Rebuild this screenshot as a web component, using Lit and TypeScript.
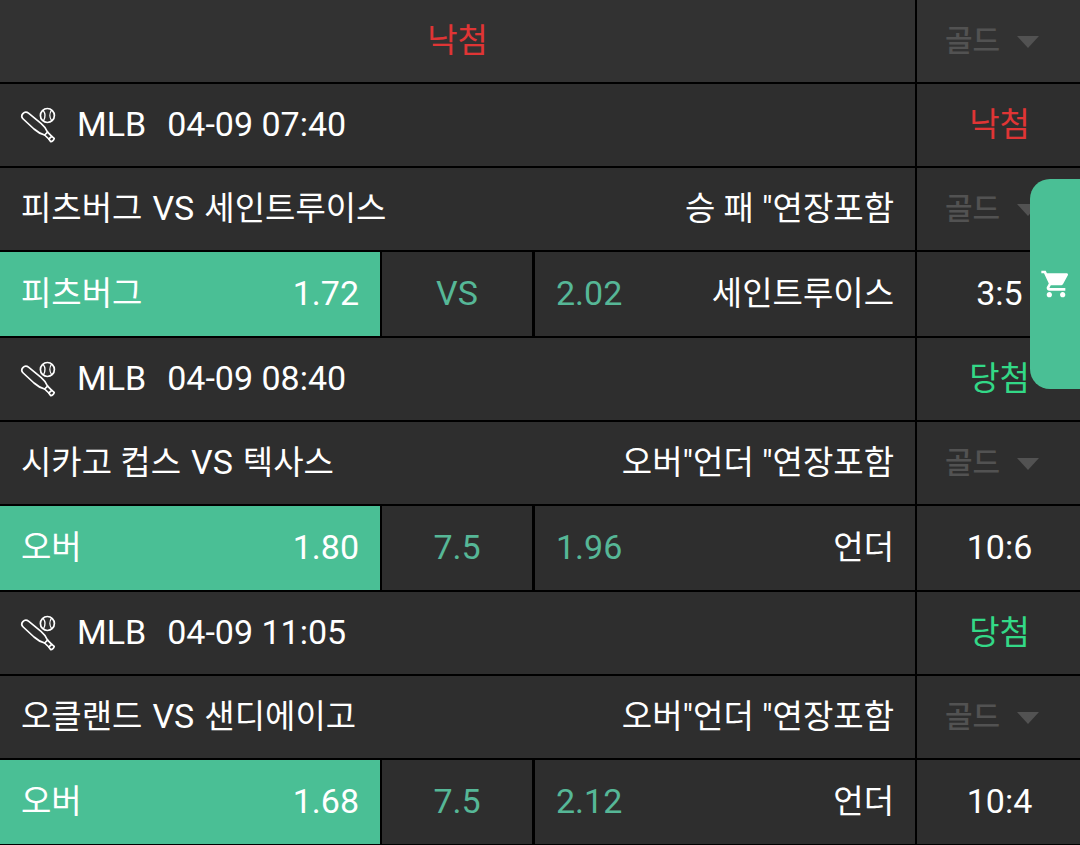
import { LitElement, html, css, svg } from "lit";
import { customElement, property } from "lit/decorators.js";

interface Game {
  league: string;
  time: string;
  won: boolean;
  teams: [string, string];
  market: string;
  home: string;
  homeOdds: string;
  line: string;
  awayOdds: string;
  away: string;
  score: string;
}

const GAMES: Game[] = [
  { league: "MLB", time: "04-09 07:40", won: false, teams: ["피츠버그", "세인트루이스"], market: '승 패 "연장포함', home: "피츠버그", homeOdds: "1.72", line: "VS", awayOdds: "2.02", away: "세인트루이스", score: "3:5" },
  { league: "MLB", time: "04-09 08:40", won: true, teams: ["시카고 컵스", "텍사스"], market: '오버"언더 "연장포함', home: "오버", homeOdds: "1.80", line: "7.5", awayOdds: "1.96", away: "언더", score: "10:6" },
  { league: "MLB", time: "04-09 11:05", won: true, teams: ["오클랜드", "샌디에이고"], market: '오버"언더 "연장포함', home: "오버", homeOdds: "1.68", line: "7.5", awayOdds: "2.12", away: "언더", score: "10:4" },
];

const baseball = svg`
  <svg class="sport" viewBox="0 0 36 36" aria-hidden="true">
    <g fill="none" stroke="#fff" stroke-width="1.7" stroke-linejoin="round" stroke-linecap="round">
      <path d="M8.8 6.4C6.8 4.8 4.4 5 2.9 6.6C1.4 8.3 1.5 10.4 3.2 12L14 22C17.4 25 21 27 24.6 28L28.8 32L30.6 34.6C32.2 34.8 34 33 34.2 31.4L31.8 29.4L27.6 25.2C26.4 21.8 24 19 21 16.4Z"/>
      <path d="M24.6 28L27.6 25.2M28.8 32L31.8 29.4"/>
      <circle cx="27.4" cy="8.5" r="7"/>
    </g>
    <path fill="none" stroke="#fff" stroke-width="1.3" stroke-linecap="round" d="M23.2 3.4C25.6 6.6 25.4 10.6 23.4 14M31.6 3.2C29.2 6.4 29.4 10.8 31.8 13.8"/>
  </svg>`;

@customElement("grade-select")
class GradeSelect extends LitElement {
  static styles = css`
    :host { display: block; }
    .wrap { display: flex; align-items: center; gap: 15px; }
    .select {
      appearance: none;
      border: 0;
      margin: 0;
      padding: 0;
      background: transparent;
      color: #525252;
      opacity: 1;
      font: 500 30px/40px Roboto, "Noto Sans CJK KR", sans-serif;
    }
    .arrow { display: block; width: 24px; height: 12px; margin-top: 2px; fill: #525252; }
  `;
  render() {
    return html`<div class="wrap">
      <select class="select" disabled aria-label="등급"><option>골드</option></select>
      <svg class="arrow" viewBox="0 0 24 12" aria-hidden="true"><path d="M1 0H23L12 12Z" /></svg>
    </div>`;
  }
}

@customElement("game-block")
class GameBlock extends LitElement {
  @property({ attribute: false }) game!: Game;

  static styles = css`
    :host { display: grid; gap: 2px; }
    .row { display: grid; grid-template-columns: minmax(0, 1fr) 163px; gap: 2px; }
    .cell {
      box-sizing: border-box;
      min-height: 82px;
      padding: 0 21px;
      background: #2e2e2e;
      display: flex;
      align-items: center;
      justify-content: space-between;
    }
    .info { justify-content: flex-start; padding-left: 20px; }
    .side { justify-content: center; padding: 0 0 0 2px; }
    .grade { justify-content: flex-start; padding: 0 0 0 28px; }
    .sport { width: 36px; height: 36px; margin-right: 21px; }
    .league { margin-right: 21px; }
    .teams { display: flex; align-items: center; gap: 10px; }
    .latin { font-size: 34px; padding-bottom: 2px; }
    .lost { color: #e03535; }
    .won { color: #33d987; }
    .odds { display: grid; grid-template-columns: minmax(0, 1fr) 151px minmax(0, 1fr); column-gap: 2px; }
    .tall { min-height: 84px; }
    .pick {
      width: 100%;
      border: 0;
      margin: 0;
      color: #fff;
      font: inherit;
      cursor: pointer;
    }
    .chosen { background: #4abf95; }
    .line {
      justify-content: center;
      padding: 0;
      border-right: 1px solid #000;
      color: #56b797;
    }
    .rate { color: #56b797; }
  `;

  render() {
    const g = this.game;
    return html`
      <div class="row">
        <div class="cell info">
          ${baseball}
          <span class="latin league">${g.league}</span>
          <span class="latin">${g.time}</span>
        </div>
        <div class="cell side ${g.won ? "won" : "lost"}">${g.won ? "당첨" : "낙첨"}</div>
      </div>
      <div class="row">
        <div class="cell">
          <div class="teams"><span>${g.teams[0]}</span><span class="latin">VS</span><span>${g.teams[1]}</span></div>
          <span>${g.market}</span>
        </div>
        <div class="cell grade"><grade-select></grade-select></div>
      </div>
      <div class="row">
        <div class="odds">
          <button class="cell tall pick chosen"><span>${g.home}</span><span class="latin">${g.homeOdds}</span></button>
          <div class="cell tall line"><span class="latin">${g.line}</span></div>
          <button class="cell tall pick"><span class="latin rate">${g.awayOdds}</span><span>${g.away}</span></button>
        </div>
        <div class="cell tall side"><span class="latin">${g.score}</span></div>
      </div>
    `;
  }
}

@customElement("app-root")
class AppRoot extends LitElement {
  static styles = css`
    :host {
      display: block;
      background: #000;
      color: #fff;
      font: 33px/44px Roboto, "Noto Sans CJK KR", sans-serif;
    }
    .slip { display: grid; gap: 2px; padding-bottom: 1px; }
    .head { display: grid; grid-template-columns: minmax(0, 1fr) 163px; gap: 2px; }
    .result, .grade {
      min-height: 82px;
      background: #323232;
      display: flex;
      align-items: center;
    }
    .result { justify-content: center; color: #e03535; }
    .grade { padding-left: 28px; }
    .cart {
      position: fixed;
      right: 0;
      top: 179px;
      width: 50px;
      height: 210px;
      border: 0;
      margin: 0;
      padding: 0 0 0 2px;
      border-radius: 20px 0 0 20px;
      background: #4abf95;
      display: flex;
      align-items: center;
      justify-content: center;
      cursor: pointer;
    }
    .cart-icon { width: 32px; height: 32px; fill: #fff; }
  `;

  render() {
    return html`
      <main class="slip">
        <div class="head">
          <div class="result">낙첨</div>
          <div class="grade"><grade-select></grade-select></div>
        </div>
        ${GAMES.map((g) => html`<game-block .game=${g}></game-block>`)}
      </main>
      <button class="cart" aria-label="장바구니">
        <svg class="cart-icon" viewBox="0 0 24 24" aria-hidden="true">
          <path d="M7 18c-1.100 0-1.990.9-1.990 2S5.900 22 7 22s2-.9 2-2-.9-2-2-2zM1 2v2h2l3.600 7.590-1.350 2.450c-.16.28-.25.61-.25.96 0 1.100.9 2 2 2h12v-2H7.420c-.14 0-.25-.11-.25-.25l.03-.12.9-1.630h7.450c.75 0 1.410-.41 1.750-1.030l3.580-6.490c.08-.14.12-.31.12-.48 0-.55-.45-1-1-1H5.210l-.94-2H1zm16 16c-1.100 0-1.990.9-1.990 2s.89 2 1.990 2 2-.9 2-2-.9-2-2-2z" />
        </svg>
      </button>
    `;
  }
}
